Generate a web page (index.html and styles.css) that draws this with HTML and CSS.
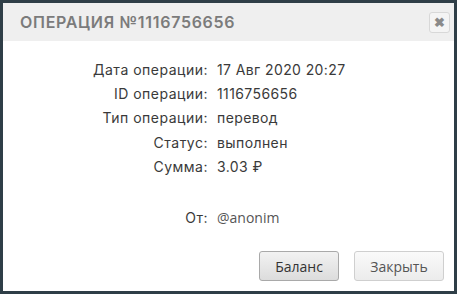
FILE: index.html
```html
<!DOCTYPE html>
<html lang="ru">
<head>
  <meta charset="UTF-8">
  <title>Операция</title>
  <link rel="stylesheet" href="styles.css">
</head>
<body>
  <div class="modal">
    <!-- Header -->
    <div class="modal-head">
      <span class="modal-title">Операция №1116756656</span>
      <button class="close-btn" type="button">&#10006;</button>
    </div>

    <!-- Details -->
    <div class="modal-body">
      <div class="row"><span class="label">Дата операции:</span><span class="value">17 Авг 2020 20:27</span></div>
      <div class="row"><span class="label">ID операции:</span><span class="value">1116756656</span></div>
      <div class="row"><span class="label">Тип операции:</span><span class="value">перевод</span></div>
      <div class="row"><span class="label">Статус:</span><span class="value">выполнен</span></div>
      <div class="row"><span class="label">Сумма:</span><span class="value">3.03 &#8381;</span></div>
      <div class="row from"><span class="label">От:</span><span class="value user">@anonim</span></div>
    </div>

    <!-- Footer -->
    <div class="modal-foot">
      <button class="btn btn-dark" type="button">Баланс</button>
      <button class="btn" type="button">Закрыть</button>
    </div>
  </div>
</body>
</html>
```

FILE: styles.css
```css
body {
  margin: 0;
  background-color: #2f3e47;
  padding: 3px 3px 3px 3px;
  font-family: Inter, "Noto Sans", sans-serif;
}
.modal {
  background-color: #fff;
  height: 288px;
  display: flex;
  flex-direction: column;
}
.modal-head {
  background-color: #efefef;
  height: 38px;
  display: flex;
  align-items: center;
  justify-content: space-between;
  padding: 0 4px 0 17px;
}
.modal-title {
  text-transform: uppercase;
  font-size: 16px;
  font-weight: 600;
  letter-spacing: 0.7px;
  color: #7b7b7b;
}
.close-btn {
  width: 21px;
  height: 21px;
  padding: 0;
  border: 1px solid #d8d8d8;
  border-radius: 3px;
  background-color: #f4f4f4;
  color: #8a8a8a;
  font-size: 13px;
  font-weight: bold;
  line-height: 19px;
}
.modal-body {
  padding-top: 16px;
  flex: 1;
}
.row {
  display: flex;
  height: 24.4px;
  align-items: center;
  font-size: 14px;
  color: #3a3a3a;
}
.label {
  width: 205px;
  text-align: right;
  padding-right: 9px;
  letter-spacing: 0.5px;
}
.value {
  letter-spacing: 0.4px;
}
.from {
  margin-top: 26px;
}
.user {
  font-family: "Open Sans", sans-serif;
  letter-spacing: 0;
  color: #555;
}
.modal-foot {
  display: flex;
  justify-content: flex-end;
  gap: 15px;
  padding: 0 10px 10px 0;
}
.btn {
  width: 90px;
  height: 30px;
  border: 1px solid #cfcfcf;
  border-radius: 3px;
  background: linear-gradient(#fafafa, #ececec);
  font-family: "Open Sans", sans-serif;
  font-size: 14px;
  color: #555;
}
.btn-dark {
  width: 80px;
  border-color: #a9a9a9;
  background: linear-gradient(#f2f2f2, #dcdcdc);
  color: #333;
}
```
